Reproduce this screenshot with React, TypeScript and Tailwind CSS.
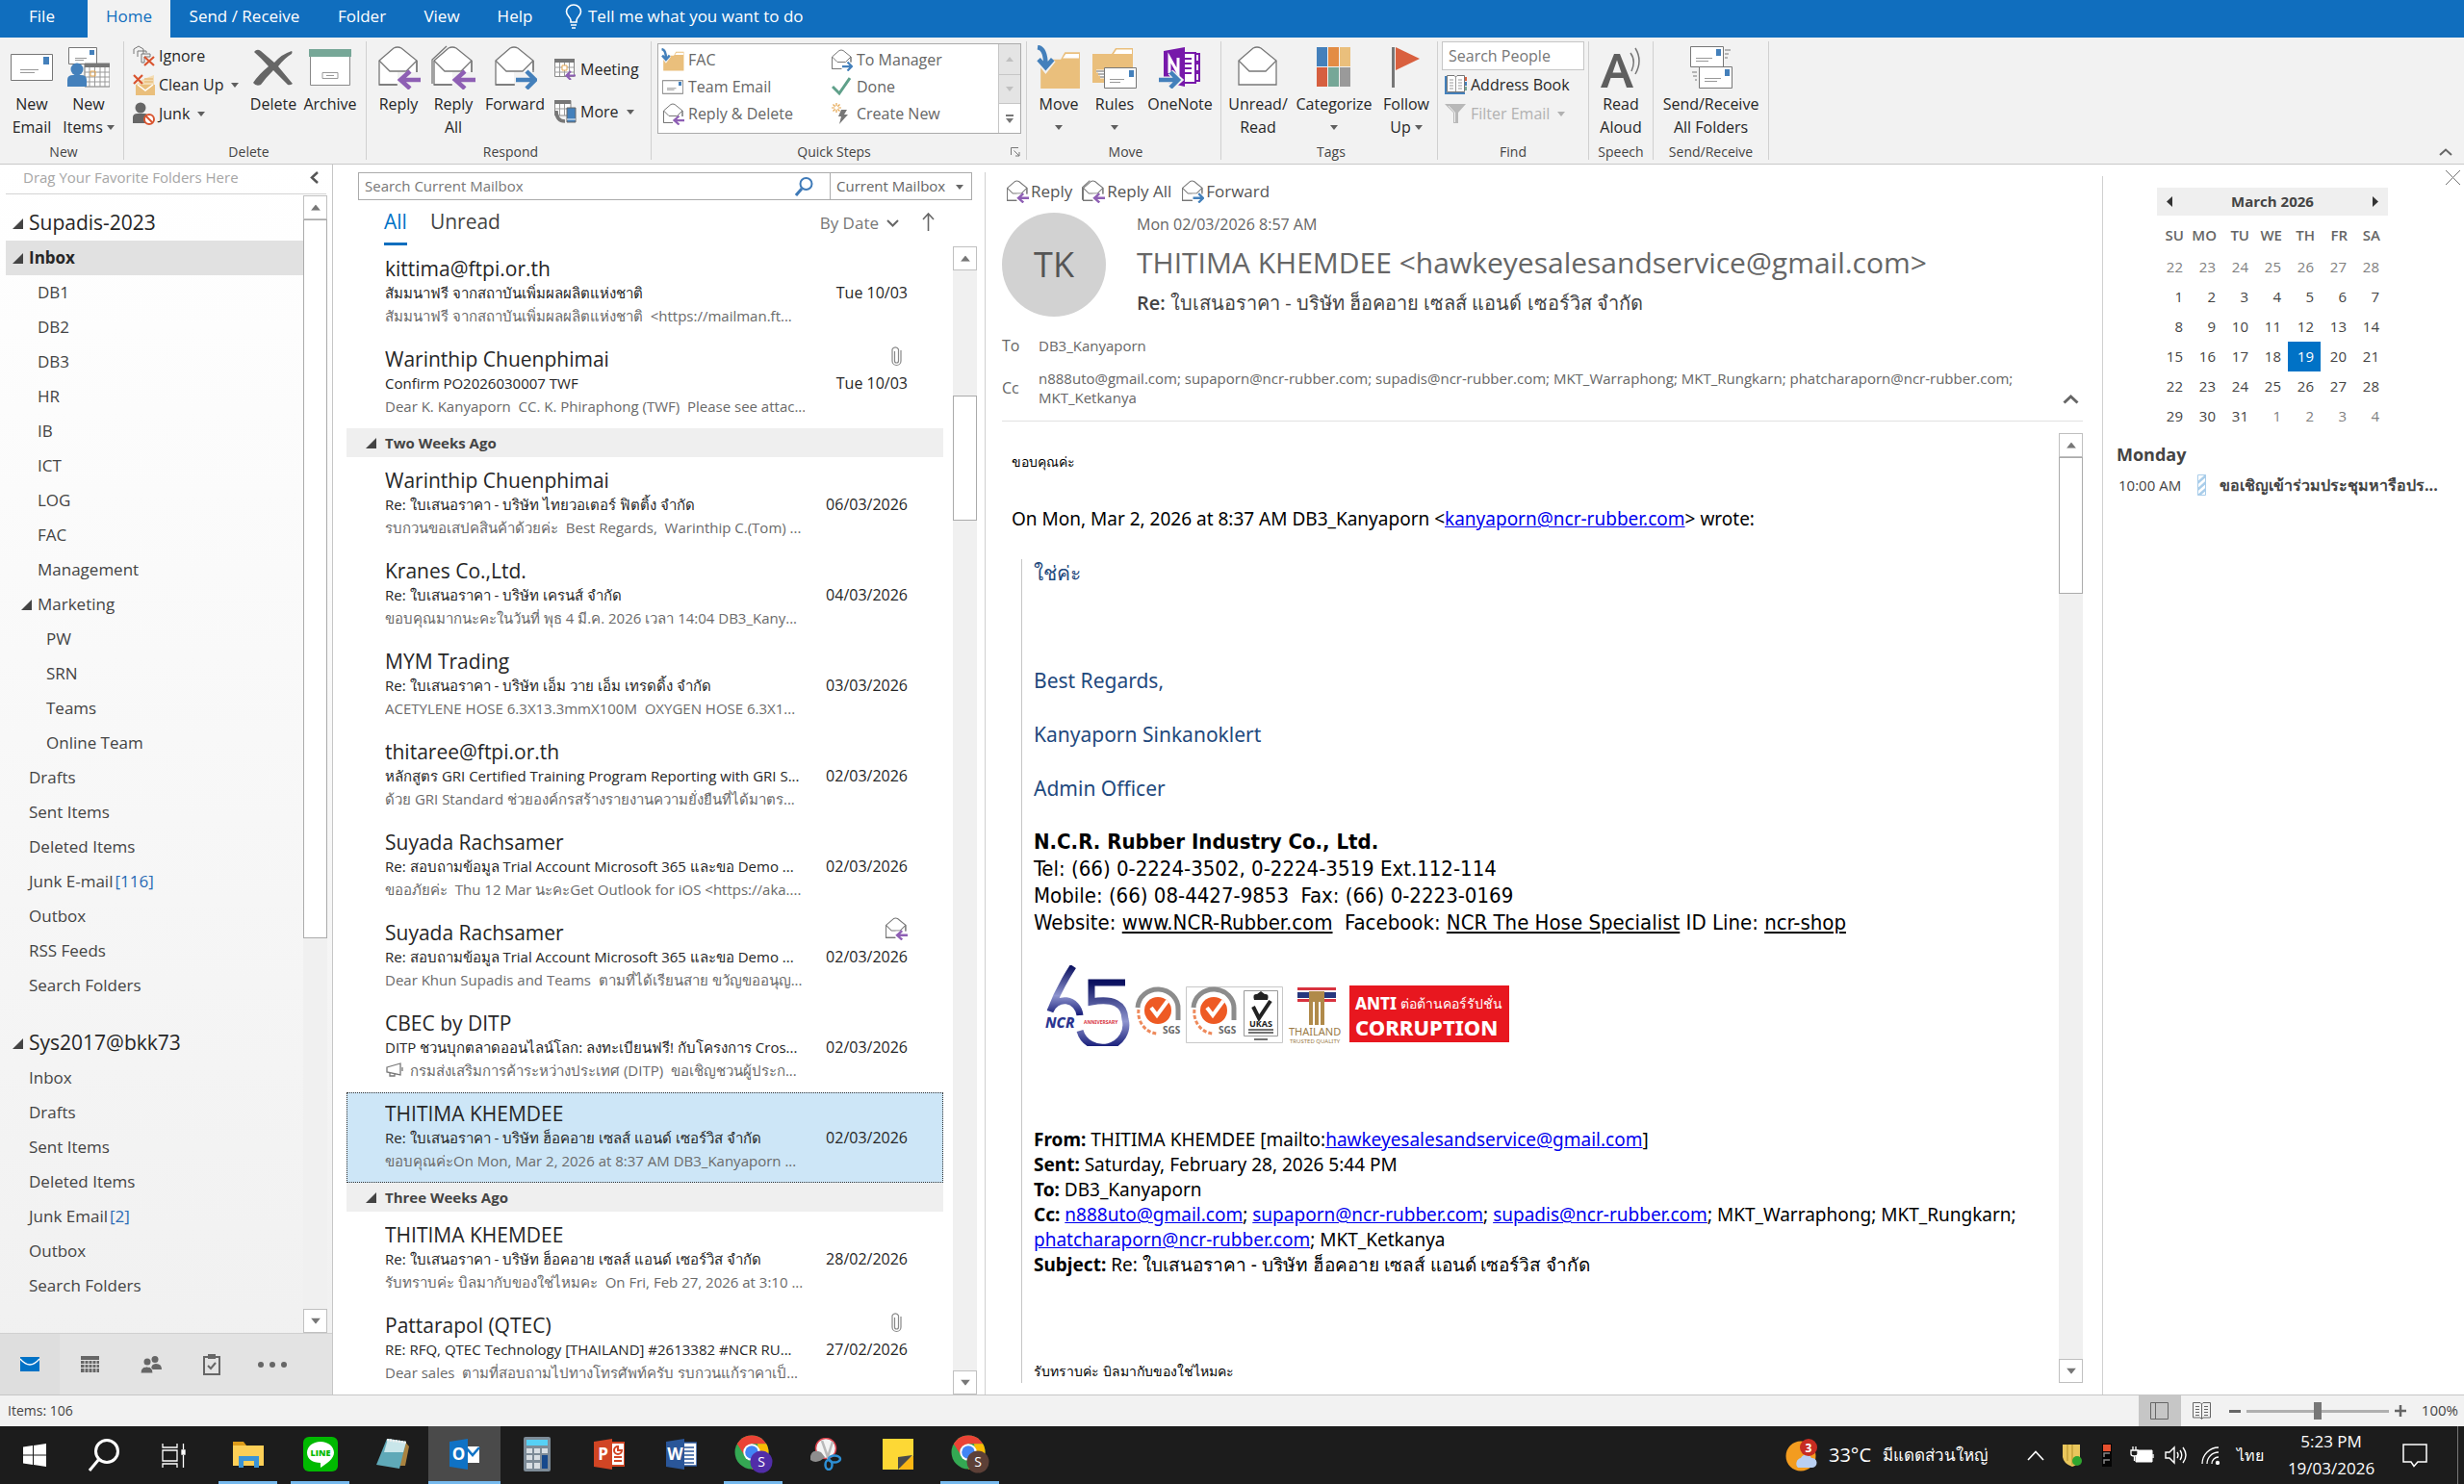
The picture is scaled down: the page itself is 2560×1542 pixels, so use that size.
import { useState } from "react";
import type { ReactNode } from "react";

type Mail = {
  id: number;
  from: string;
  subject: string;
  preview: string;
  date: string;
  flag?: "clip" | "replied";
  megaphone?: boolean;
};

type MailGroup = { title: string | null; mails: Mail[] };

type Folder = { name: string; level: 1 | 2 | 3; count?: number; open?: boolean };

const MAIL_GROUPS: MailGroup[] = [
  {
    title: null,
    mails: [
      { id: 1, from: "kittima@ftpi.or.th", subject: "สัมมนาฟรี จากสถาบันเพิ่มผลผลิตแห่งชาติ", preview: "สัมมนาฟรี จากสถาบันเพิ่มผลผลิตแห่งชาติ  <https://mailman.ft...", date: "Tue 10/03" },
      { id: 2, from: "Warinthip Chuenphimai", subject: "Confirm PO2026030007 TWF", preview: "Dear K. Kanyaporn  CC. K. Phiraphong (TWF)  Please see attac...", date: "Tue 10/03", flag: "clip" },
    ],
  },
  {
    title: "Two Weeks Ago",
    mails: [
      { id: 3, from: "Warinthip Chuenphimai", subject: "Re: ใบเสนอราคา - บริษัท ไทยวอเตอร์ ฟิตติ้ง จำกัด", preview: "รบกวนขอเสปคสินค้าด้วยค่ะ  Best Regards,  Warinthip C.(Tom) ...", date: "06/03/2026" },
      { id: 4, from: "Kranes Co.,Ltd.", subject: "Re: ใบเสนอราคา - บริษัท เครนส์ จำกัด", preview: "ขอบคุณมากนะคะในวันที่ พุธ 4 มี.ค. 2026 เวลา 14:04 DB3_Kany...", date: "04/03/2026" },
      { id: 5, from: "MYM Trading", subject: "Re: ใบเสนอราคา - บริษัท เอ็ม วาย เอ็ม เทรดดิ้ง จำกัด", preview: "ACETYLENE HOSE 6.3X13.3mmX100M  OXYGEN HOSE 6.3X1...", date: "03/03/2026" },
      { id: 6, from: "thitaree@ftpi.or.th", subject: "หลักสูตร GRI Certified Training Program Reporting with GRI S...", preview: "ด้วย GRI Standard ช่วยองค์กรสร้างรายงานความยั่งยืนที่ได้มาตร...", date: "02/03/2026" },
      { id: 7, from: "Suyada Rachsamer", subject: "Re: สอบถามข้อมูล Trial Account Microsoft 365 และขอ Demo ...", preview: "ขออภัยค่ะ  Thu 12 Mar นะคะGet Outlook for iOS <https://aka....", date: "02/03/2026" },
      { id: 8, from: "Suyada Rachsamer", subject: "Re: สอบถามข้อมูล Trial Account Microsoft 365 และขอ Demo ...", preview: "Dear Khun Supadis and Teams  ตามที่ได้เรียนสาย ขวัญขออนุญ...", date: "02/03/2026", flag: "replied" },
      { id: 9, from: "CBEC by DITP", subject: "DITP ชวนบุกตลาดออนไลน์โลก: ลงทะเบียนฟรี! กับโครงการ Cros...", preview: "กรมส่งเสริมการค้าระหว่างประเทศ (DITP)  ขอเชิญชวนผู้ประก...", date: "02/03/2026", megaphone: true },
      { id: 10, from: "THITIMA KHEMDEE", subject: "Re: ใบเสนอราคา - บริษัท ฮ็อคอาย เซลส์ แอนด์ เซอร์วิส จำกัด", preview: "ขอบคุณค่ะOn Mon, Mar 2, 2026 at 8:37 AM DB3_Kanyaporn ...", date: "02/03/2026" },
    ],
  },
  {
    title: "Three Weeks Ago",
    mails: [
      { id: 11, from: "THITIMA KHEMDEE", subject: "Re: ใบเสนอราคา - บริษัท ฮ็อคอาย เซลส์ แอนด์ เซอร์วิส จำกัด", preview: "รับทราบค่ะ บิลมากับของใช่ไหมคะ  On Fri, Feb 27, 2026 at 3:10 ...", date: "28/02/2026" },
      { id: 12, from: "Pattarapol (QTEC)", subject: "RE: RFQ, QTEC Technology [THAILAND] #2613382 #NCR RU...", preview: "Dear sales  ตามที่สอบถามไปทางโทรศัพท์ครับ รบกวนแก้ราคาเป็...", date: "27/02/2026", flag: "clip" },
    ],
  },
];

const MAIN_FOLDERS: Folder[] = [
  { name: "Inbox", level: 1, open: true },
  { name: "DB1", level: 2 },
  { name: "DB2", level: 2 },
  { name: "DB3", level: 2 },
  { name: "HR", level: 2 },
  { name: "IB", level: 2 },
  { name: "ICT", level: 2 },
  { name: "LOG", level: 2 },
  { name: "FAC", level: 2 },
  { name: "Management", level: 2 },
  { name: "Marketing", level: 2, open: true },
  { name: "PW", level: 3 },
  { name: "SRN", level: 3 },
  { name: "Teams", level: 3 },
  { name: "Online Team", level: 3 },
  { name: "Drafts", level: 1 },
  { name: "Sent Items", level: 1 },
  { name: "Deleted Items", level: 1 },
  { name: "Junk E-mail", level: 1, count: 116 },
  { name: "Outbox", level: 1 },
  { name: "RSS Feeds", level: 1 },
  { name: "Search Folders", level: 1 },
];

const SECOND_FOLDERS: Folder[] = [
  { name: "Inbox", level: 1 },
  { name: "Drafts", level: 1 },
  { name: "Sent Items", level: 1 },
  { name: "Deleted Items", level: 1 },
  { name: "Junk Email", level: 1, count: 2 },
  { name: "Outbox", level: 1 },
  { name: "Search Folders", level: 1 },
];

const WEEKDAYS = ["SU", "MO", "TU", "WE", "TH", "FR", "SA"];
const WEEKS = [
  [22, 23, 24, 25, 26, 27, 28],
  [1, 2, 3, 4, 5, 6, 7],
  [8, 9, 10, 11, 12, 13, 14],
  [15, 16, 17, 18, 19, 20, 21],
  [22, 23, 24, 25, 26, 27, 28],
  [29, 30, 31, 1, 2, 3, 4],
];

export default function App() {
  const [selectedId, setSelectedId] = useState(10);

  return (
    <div className="flex h-screen flex-col overflow-hidden bg-white font-['Open_Sans','Noto_Sans',sans-serif] text-base text-[#262626]">
      <TabBar />
      <Ribbon />
      <main className="flex min-h-0 flex-1">
        <FolderPane />
        <MailList selectedId={selectedId} onSelect={setSelectedId} />
        <ReadingPane />
        <TodoBar />
      </main>
      <StatusBar />
      <Taskbar />
    </div>
  );
}

/* ---------- tabs and ribbon ---------- */

function TabBar() {
  return (
    <nav className="flex h-[39px] shrink-0 items-stretch bg-[#106ebe] text-[17px] leading-8 text-white [&>button]:pb-1.5">
      <button type="button" className="w-[91px] pr-1">File</button>
      <button type="button" className="w-[86px] bg-[#f2f2f2] text-[#106ebe]">Home</button>
      <button type="button" className="w-[154px]">Send / Receive</button>
      <button type="button" className="w-[90px]">Folder</button>
      <button type="button" className="w-[76px]">View</button>
      <button type="button" className="w-[76px]">Help</button>
      <button type="button" className="flex items-center gap-1.5 pl-3.5">
        <svg width="18" height="26" viewBox="0 0 18 26" fill="none" stroke="#fff" strokeWidth="1.6">
          <path d="M6 19V17C6 14 1.500 12.500 1.500 8A7.500 7 0 0 1 16.500 8C16.500 12.500 12 14 12 17V19ZM6 22H12M7 25H11" />
        </svg>
        Tell me what you want to do
      </button>
    </nav>
  );
}

function Caret({ className = "text-[#5f5f5f]" }: { className?: string }) {
  return (
    <svg width="8" height="5" viewBox="0 0 8 5" className={`inline-block ${className}`}>
      <path d="M0 0H8L4 5Z" fill="currentColor" />
    </svg>
  );
}

function RibbonGroup({ title, className, launcher, children }: { title: string; className: string; launcher?: boolean; children: ReactNode }) {
  return (
    <section className={`my-1 flex shrink-0 flex-col border-r border-[#d0d0d0] ${className}`}>
      <div className="flex flex-1">{children}</div>
      <div className="flex h-4 items-center justify-center text-sm leading-4 text-[#444]">
        <span className="flex-1 text-center">{title}</span>
        {launcher && (
          <svg width="10" height="10" viewBox="0 0 10 10" fill="none" stroke="#777" className="mr-1.5">
            <path d="M.5 8V.5H8M3.500 3.500L9 9M9 5V9H5" />
          </svg>
        )}
      </div>
    </section>
  );
}

function BigButton({ icon, lines, className, caret }: { icon: ReactNode; lines: string[]; className: string; caret?: boolean }) {
  return (
    <button type="button" className={`flex shrink-0 flex-col items-center self-start whitespace-nowrap leading-6 ${className}`}>
      <span className="flex h-[53px] items-center justify-center">{icon}</span>
      <span>{lines[0]}</span>
      <span className="flex h-6 items-center gap-1">
        {lines[1]}
        {caret && <Caret />}
      </span>
    </button>
  );
}

function SmallButton({ icon, label, caret, disabled }: { icon: ReactNode; label: string; caret?: boolean; disabled?: boolean }) {
  return (
    <button
      type="button"
      disabled={disabled}
      className={`flex h-[30px] items-center gap-1 whitespace-nowrap leading-6 ${disabled ? "text-[#b1b1b1]" : ""}`}
    >
      <span className="flex w-6 justify-center">{icon}</span>
      {label}
      {caret && <Caret className={disabled ? "ml-1 text-[#b1b1b1]" : "ml-1 text-[#5f5f5f]"} />}
    </button>
  );
}

function Ribbon() {
  return (
    <header className="flex h-[132px] shrink-0 border-b border-[#c8c8c8] bg-[#f2f2f2]">
      <RibbonGroup title="New" className="w-[129px] pl-1">
        <BigButton icon={<ClosedMail />} lines={["New", "Email"]} className="w-[58px]" />
        <BigButton icon={<NewItemsIcon />} lines={["New", "Items"]} caret className="w-[60px]" />
      </RibbonGroup>

      <RibbonGroup title="Delete" className="w-[252px] pl-2">
        <div className="flex w-[118px] flex-col">
          <SmallButton icon={<IgnoreIcon />} label="Ignore" />
          <SmallButton icon={<CleanUpIcon />} label="Clean Up" caret />
          <SmallButton icon={<JunkIcon />} label="Junk" caret />
        </div>
        <BigButton icon={<DeleteIcon />} lines={["Delete"]} className="w-[58px]" />
        <BigButton icon={<ArchiveIcon />} lines={["Archive"]} className="w-[60px]" />
      </RibbonGroup>

      <RibbonGroup title="Respond" className="w-[296px] pl-1">
        <BigButton icon={<OpenMail size={46} arrow="left" />} lines={["Reply"]} className="w-[58px]" />
        <BigButton icon={<OpenMail size={46} arrow="left" double />} lines={["Reply", "All"]} className="w-[56px]" />
        <BigButton icon={<OpenMail size={46} arrow="right" />} lines={["Forward"]} className="w-[72px]" />
        <div className="flex flex-col gap-3.5 pt-3.5 pl-1">
          <SmallButton icon={<MeetingIcon />} label="Meeting" />
          <SmallButton icon={<MoreIcon />} label="More" caret />
        </div>
      </RibbonGroup>

      <RibbonGroup title="Quick Steps" className="w-[390px] pl-1.5" launcher>
        <div className="mt-0.5 flex h-[94px] w-[378px] border border-[#ababab] bg-white text-[#666]">
          <div className="grid flex-1 grid-cols-2 grid-rows-3 pt-0.5 pb-1.5 pl-[3px] [&>button]:h-7">
            <SmallButton icon={<MoveFolder size={24} />} label="FAC" />
            <SmallButton icon={<OpenMail size={23} arrow="right" />} label="To Manager" />
            <SmallButton icon={<ClosedMail small />} label="Team Email" />
            <SmallButton
              icon={
                <svg width="20" height="20" viewBox="0 0 20 20">
                  <path d="M1 10L8 17L19 1" fill="none" stroke="#5fa08a" strokeWidth="3" />
                </svg>
              }
              label="Done"
            />
            <SmallButton icon={<OpenMail size={23} arrow="left" />} label="Reply & Delete" />
            <SmallButton
              icon={
                <svg width="20" height="22" viewBox="0 0 20 22">
                  <path d="M5 0V10M0 5H10M1.500 1.500L8.500 8.500M8.500 1.500L1.500 8.500" stroke="#e5a54e" strokeWidth="1.200" />
                  <path d="M10 7H16L13 12H17L8 22L10 14H7Z" fill="#777" />
                  <circle cx="5" cy="5" r="2" fill="#fff" />
                </svg>
              }
              label="Create New"
            />
          </div>
          <div className="flex w-[23px] flex-col border-l border-[#c6c6c6]">
            <button type="button" aria-label="Previous row" className="flex h-8 items-center justify-center border-b border-[#c6c6c6] bg-[#e4e4e4]">
              <Caret className="rotate-180 text-[#c0c0c0]" />
            </button>
            <button type="button" aria-label="Next row" className="flex h-[30px] items-center justify-center border-b border-[#c6c6c6] bg-[#e4e4e4]">
              <Caret className="text-[#c0c0c0]" />
            </button>
            <button type="button" aria-label="All quick steps" className="flex flex-1 flex-col items-center justify-center gap-0.5">
              <span className="h-0.5 w-2 bg-[#777]" />
              <Caret className="text-[#777]" />
            </button>
          </div>
        </div>
      </RibbonGroup>

      <RibbonGroup title="Move" className="w-[202px] pl-1">
        <BigButton icon={<MoveFolder size={46} />} lines={["Move"]} caret className="w-[58px]" />
        <BigButton icon={<RulesIcon />} lines={["Rules"]} caret className="w-[58px]" />
        <BigButton icon={<OneNoteIcon />} lines={["OneNote"]} className="w-[78px]" />
      </RibbonGroup>

      <RibbonGroup title="Tags" className="w-[225px] pl-1">
        <BigButton icon={<OpenMail size={46} />} lines={["Unread/", "Read"]} className="w-[68px]" />
        <BigButton icon={<CategorizeIcon />} lines={["Categorize"]} caret className="w-[90px]" />
        <BigButton
          icon={
            <svg width="30" height="44" viewBox="0 0 30 44">
              <path d="M0 1H3V43H0Z" fill="#777" />
              <path d="M4 1L29 13L4 25Z" fill="#d9603f" />
            </svg>
          }
          lines={["Follow", "Up"]}
          caret
          className="w-[60px]"
        />
      </RibbonGroup>

      <RibbonGroup title="Find" className="w-[157px] px-1">
        <div className="flex flex-1 flex-col">
          <input
            aria-label="Search People"
            placeholder="Search People"
            className="h-[30px] w-full border border-[#c6c6c6] bg-white px-1.5 placeholder:text-[#777]"
          />
          <div className="flex flex-col pl-0.5">
            <SmallButton icon={<AddressBookIcon />} label="Address Book" />
            <SmallButton
              disabled
              caret
              label="Filter Email"
              icon={
                <svg width="22" height="22" viewBox="0 0 22 22">
                  <path d="M0 1H22L14 10V21H9V10Z" fill="#b8b8b8" />
                  <path d="M4 3L10.500 10V20" fill="none" stroke="#f2f2f2" />
                </svg>
              }
            />
          </div>
        </div>
      </RibbonGroup>

      <RibbonGroup title="Speech" className="w-[67px]">
        <BigButton
          icon={
            <svg width="44" height="44" viewBox="0 0 44 44">
              <path d="M1 43L15 8H21L35 43H28L24.500 33H11.500L8 43ZM13.500 27.500H22.500L18 14.500Z" fill="#5f5f5f" />
              <path d="M32 7Q38 15 33 26M37 2Q45 15 37 29" fill="none" stroke="#777" strokeWidth="1.500" />
            </svg>
          }
          lines={["Read", "Aloud"]}
          className="w-[66px]"
        />
      </RibbonGroup>

      <RibbonGroup title="Send/Receive" className="w-[120px]">
        <BigButton icon={<SendReceiveIcon />} lines={["Send/Receive", "All Folders"]} className="w-[119px]" />
      </RibbonGroup>

      <button type="button" aria-label="Collapse ribbon" className="mr-3 mb-2 ml-auto self-end">
        <svg width="14" height="8" viewBox="0 0 14 8" fill="none" stroke="#666" strokeWidth="2">
          <path d="M1 7L7 1.500L13 7" />
        </svg>
      </button>
    </header>
  );
}

function OpenMail({ size, arrow, double }: { size: number; arrow?: "left" | "right"; double?: boolean }) {
  return (
    <svg width={size} height={size} viewBox="0 0 46 46" fill="none" strokeWidth={size > 30 ? 1.3 : 2}>
      {double && <path d="M1 40V15L16 1" stroke="#777" />}
      <path d="M3 16L18 3Q22 1 26 3L42 16V41H3Z" fill="#fff" stroke="#777" />
      <path d="M3 16L14 27H31L42 16" stroke="#777" />
      {arrow === "left" && (
        <>
          <path d="M22 46V28H46V46Z" fill={size > 30 ? "#f2f2f2" : "#fff"} stroke="none" />
          <path d="M3 41H21M42 16V28" stroke="#777" />
          <path d="M46 36H26M35 27L25 36L35 45" stroke="#8e5fb4" strokeWidth="4.500" />
        </>
      )}
      {arrow === "right" && (
        <>
          <path d="M22 46V28H46V46Z" fill={size > 30 ? "#f2f2f2" : "#fff"} stroke="none" />
          <path d="M3 41H23M42 16V26" stroke="#777" />
          <path d="M24 36H44M35 27L44 36L35 45" stroke="#4480bb" strokeWidth="4.500" />
        </>
      )}
    </svg>
  );
}

function ClosedMail({ small }: { small?: boolean }) {
  return (
    <svg width={small ? 22 : 44} height={small ? 15 : 28} viewBox="0 0 44 28" fill="none" strokeWidth={small ? 2 : 1}>
      <path d="M.5 .5H43.500V27.500H.5Z" fill="#fff" stroke="#777" />
      <path d="M34 3H40V11H34Z" fill="#4480bb" />
      <path d="M10 16.500H29M10 19.500H25" stroke="#999" />
    </svg>
  );
}

function NewItemsIcon() {
  return (
    <svg width="44" height="42" viewBox="0 0 44 42" fill="none">
      <path d="M1.500 .5H30.500V17.500H1.500Z" fill="#fff" stroke="#777" />
      <path d="M23 3H28V8H23Z" fill="#4480bb" />
      <path d="M8 11.500H20M8 13.500H17" stroke="#999" />
      <path d="M18 17H44V41H18Z" fill="#fff" stroke="#777" />
      <path d="M18 17H44V21H18Z" fill="#777" />
      <path d="M23 21V41M28.500 21V41M34 21V41M39 21V41M18 26H44M18 31H44M18 36H44" stroke="#999" />
      <path d="M24 25H29V30H24Z" stroke="#e5a54e" />
      <circle cx="10" cy="23" r="6.500" fill="#4480bb" />
      <path d="M0 41V34Q0 29 6 29H14Q20 29 20 34V41Z" fill="#4480bb" />
    </svg>
  );
}

function IgnoreIcon() {
  return (
    <svg width="23" height="22" viewBox="0 0 23 22" fill="none" stroke="#777">
      <path d="M1 9V4L6 1L11 4V9M5 12V6H14V8M9 16V9H18V12H12V18H9Z" />
      <path d="M12 12L22 21M22 12L12 21" stroke="#d9542f" strokeWidth="2.200" />
    </svg>
  );
}

function CleanUpIcon() {
  return (
    <svg width="23" height="22" viewBox="0 0 23 22" fill="none">
      <path d="M9 6L22 1V20H3V11Z" fill="#f3dcb4" />
      <path d="M3 11H23V22H3Z" fill="#eabf7c" />
      <path d="M5 11L13 17L21 11" stroke="#fff" strokeWidth="1.500" />
      <path d="M12 5H21M12 8H21" stroke="#eabf7c" strokeWidth="1.500" />
      <path d="M1 1L10 10M10 1L1 10" stroke="#d9542f" strokeWidth="2.200" />
    </svg>
  );
}

function JunkIcon() {
  return (
    <svg width="23" height="24" viewBox="0 0 23 24">
      <circle cx="8" cy="6" r="5.500" fill="#666" />
      <path d="M0 22V16Q0 12 5 12H12Q16 12 16 16V22Z" fill="#666" />
      <circle cx="17" cy="18" r="5" fill="#fff" stroke="#d9542f" strokeWidth="2" />
      <path d="M13.500 14.500L20.500 21.500" stroke="#d9542f" strokeWidth="2" />
    </svg>
  );
}

function DeleteIcon() {
  return (
    <svg width="42" height="38" viewBox="0 0 42 38">
      <path d="M1 3Q4 -1 8 2L22 14Q30 5 40 2Q41 3 40 5Q33 9 26 18L41 36Q38 38 36 37L21 22Q13 30 8 37Q3 39 0 35Q6 26 16 18Q8 9 1 3Z" fill="#666" />
    </svg>
  );
}

function ArchiveIcon() {
  return (
    <svg width="44" height="38" viewBox="0 0 44 38" fill="none">
      <path d="M1.500 5V37.500H42.500V5" fill="#fff" stroke="#888" />
      <path d="M0 0H44V8H0Z" fill="#76a797" />
      <path d="M14 24.500H30V30.500H14Z M18 27.500H26" stroke="#999" />
    </svg>
  );
}

function MeetingIcon() {
  return (
    <svg width="22" height="22" viewBox="0 0 22 22" fill="none">
      <path d="M.5 1H20.500V18.500H.5Z" fill="#fff" stroke="#888" />
      <path d="M0 0H21V4H0Z" fill="#777" />
      <path d="M5.500 4V18M10.500 4V18M15.500 4V18M0 9H20M0 14H20" stroke="#999" />
      <path d="M8 7H13V12H8Z" fill="#fff" stroke="#e5a54e" />
      <path d="M22 17.500H13M17 13L12.500 17.500L17 22" stroke="#8e5fb4" strokeWidth="2.200" />
    </svg>
  );
}

function MoreIcon() {
  return (
    <svg width="23" height="24" viewBox="0 0 23 24" fill="none">
      <path d="M.5 .5H17V16H.5Z" fill="#fff" stroke="#888" />
      <path d="M0 0H17V4H0Z" fill="#777" />
      <path d="M5.500 4V16M10.500 4V16M0 9H17" stroke="#999" />
      <path d="M2 11Q2 22 11 22" stroke="#777" strokeWidth="3.500" />
      <path d="M13 8H22V23H13Z" fill="#4480bb" stroke="#666" />
      <path d="M13 20H22" stroke="#fff" />
    </svg>
  );
}

function MoveFolder({ size }: { size: number }) {
  return (
    <svg width={size} height={size} viewBox="0 0 44 44" fill="none">
      <path d="M4 14H24L28 7H43V43H4Z" fill="#eabf7c" />
      <path d="M26 13L29 8.500H42V13Z" fill="#fff" />
      <path d="M1 2Q9 3 9 20M2 14L9 23L16 14" stroke="#f2f2f2" strokeWidth="7" />
      <path d="M1 2Q9 3 9 20M2 14L9 22L16 14" stroke="#4480bb" strokeWidth="4.500" />
    </svg>
  );
}

function RulesIcon() {
  return (
    <svg width="46" height="44" viewBox="0 0 46 44" fill="none">
      <path d="M0 8H20L24 2H42V38H0Z" fill="#eabf7c" />
      <path d="M22 8L25 3.500H41V8Z" fill="#fff" />
      <path d="M4 26H12M6 29H12M8 32H12" stroke="#fff" strokeWidth="3" />
      <path d="M4 26H12M6 29H12M8 32H12" stroke="#666" />
      <path d="M12.500 22.500H45.500V43.500H12.500Z" fill="#fff" stroke="#777" />
      <path d="M38 25H43V32H38Z" fill="#4480bb" />
      <path d="M18 34.500H33M18 37.500H29" stroke="#999" />
    </svg>
  );
}

function OneNoteIcon() {
  return (
    <svg width="44" height="44" viewBox="0 0 44 44" fill="none">
      <path d="M24 7H38V38H24Z" fill="#fff" stroke="#7719aa" strokeWidth="2" />
      <path d="M38 8H42V16H38M38 18H42V26H38M38 28H42V36H38" stroke="#7719aa" strokeWidth="2" />
      <path d="M27 13H34M27 18H34M27 23H34M27 28H34" stroke="#7719aa" strokeWidth="2" />
      <path d="M5 5L27 1V42L5 37Z" fill="#7719aa" />
      <path d="M11 28V12L20 28V12" stroke="#fff" strokeWidth="3" />
      <path d="M0 35H20M12 27L21 35L12 43" stroke="#f2f2f2" strokeWidth="7" />
      <path d="M0 35H20M12 27L20 35L12 43" stroke="#4480bb" strokeWidth="4.500" />
    </svg>
  );
}

function CategorizeIcon() {
  return (
    <svg width="36" height="42" viewBox="0 0 36 42">
      <path d="M0 0H11V20H0Z" fill="#4480bb" />
      <path d="M12 0H23V20H12Z" fill="#e38c44" />
      <path d="M24 0H35V20H24Z" fill="#eabf7c" />
      <path d="M0 21H11V41H0Z" fill="#d65f3f" />
      <path d="M12 21H23V41H12Z" fill="#76a797" />
      <path d="M24 21H35V41H24Z" fill="#9a9a9a" />
    </svg>
  );
}

function AddressBookIcon() {
  return (
    <svg width="23" height="20" viewBox="0 0 23 20" fill="none">
      <path d="M0 1H2V18H21V20H0Z" fill="#4480bb" />
      <path d="M2.500 .5H10L11.500 2L13 .5H20.500V17.500H2.500Z" fill="#fff" stroke="#777" />
      <path d="M11.500 2V17M5 5H9M5 8H9M5 11H9M14 5H18M14 8H18M14 11H18M5 14H9M14 14H18" stroke="#999" />
      <path d="M21 2H23V6H21Z" fill="#d65f3f" />
      <path d="M21 7H23V11H21Z" fill="#4480bb" />
      <path d="M21 12H23V16H21Z" fill="#76a797" />
    </svg>
  );
}

function SendReceiveIcon() {
  return (
    <svg width="44" height="44" viewBox="0 0 44 44" fill="none">
      <path d="M.5 .5H34.500V21.500H.5Z" fill="#fff" stroke="#777" />
      <path d="M27 3H32V10H27Z" fill="#4480bb" />
      <path d="M6 12.500H23M6 15.500H19" stroke="#999" />
      <path d="M36 4H42M36 8H40M36 12H39M2 27H7M3 31H7M5 35H7" stroke="#777" />
      <path d="M9.500 21.500H43.500V43.500H9.500Z" fill="#fff" stroke="#777" />
      <path d="M36 24H41V31H36Z" fill="#4480bb" />
      <path d="M15 33.500H32M15 36.500H28" stroke="#999" />
    </svg>
  );
}

/* ---------- scroll bar shared by the three panes ---------- */

function ScrollBar({ className = "", before, thumb }: { className?: string; before: string; thumb: string }) {
  return (
    <div className={`flex w-[25px] shrink-0 flex-col bg-[#f0f0f0] ${className}`}>
      <button type="button" aria-label="Scroll up" className="flex h-[25px] shrink-0 items-center justify-center border border-[#c0c0c0] bg-white">
        <Caret className="rotate-180 scale-125 text-[#777]" />
      </button>
      <div className={before} />
      <div className={`border border-[#ababab] bg-white ${thumb}`} />
      <button type="button" aria-label="Scroll down" className="mt-auto flex h-[25px] shrink-0 items-center justify-center border border-[#c0c0c0] bg-white">
        <Caret className="scale-125 text-[#777]" />
      </button>
    </div>
  );
}

/* ---------- folder pane ---------- */

function Twisty() {
  return (
    <svg width="11" height="11" viewBox="0 0 11 11" className="shrink-0">
      <path d="M11 0V11H0Z" fill="#444" />
    </svg>
  );
}

const LEVEL_PADDING = { 1: "pl-[7px]", 2: "pl-4", 3: "pl-[25px]" };

function FolderRow({ folder, selected }: { folder: Folder; selected?: boolean }) {
  return (
    <li>
      <button
        type="button"
        className={`flex h-9 w-full items-center gap-1.5 text-[17px] ${LEVEL_PADDING[folder.level]} ${
          selected ? "bg-[#e1e1e1] font-bold text-[#262626]" : "text-[#444]"
        }`}
      >
        <span className="flex w-[11px]">{folder.open && <Twisty />}</span>
        <span>
          {folder.name}
          {folder.count && <span className="pl-0.5 text-[#2a6ab5]">[{folder.count}]</span>}
        </span>
      </button>
    </li>
  );
}

function FolderPane() {
  return (
    <aside className="flex w-[346px] shrink-0 flex-col border-r border-[#c6c6c6] bg-gradient-to-b from-white to-[#f0f0f0]">
      <div className="mx-1.5 flex h-[31px] items-center justify-between border-b border-[#d4d4d4] pr-2 pb-1 pl-[18px] text-[15px] text-[#a6a6a6]">
        Drag Your Favorite Folders Here
        <button type="button" aria-label="Minimize folder pane">
          <svg width="9" height="13" viewBox="0 0 9 13" fill="none" stroke="#555" strokeWidth="2.500">
            <path d="M8 1L2 6.500L8 12" />
          </svg>
        </button>
      </div>
      <div className="flex min-h-0 flex-1 pl-1.5">
        <div className="flex-1 overflow-hidden pt-3">
          <h2 className="flex h-9 items-center gap-1.5 pl-[7px] text-[21px]">
            <Twisty />
            Supadis-2023
          </h2>
          <ul>
            {MAIN_FOLDERS.map((f, i) => (
              <FolderRow key={i} folder={f} selected={i === 0} />
            ))}
          </ul>
          <h2 className="mt-6 flex h-9 items-center gap-1.5 pl-[7px] text-[21px]">
            <Twisty />
            Sys2017@bkk73
          </h2>
          <ul>
            {SECOND_FOLDERS.map((f, i) => (
              <FolderRow key={i} folder={f} />
            ))}
          </ul>
        </div>
        <ScrollBar className="mr-[5px] mt-px" before="h-0" thumb="h-[747px]" />
      </div>
      <nav className="flex h-16 shrink-0 items-center border-t border-[#d0d0d0] bg-[#e3e3e3] text-[#666]">
        <button type="button" aria-label="Mail" className="flex h-full w-[62px] items-center justify-center bg-[#dedede]">
          <svg width="20" height="15" viewBox="0 0 20 15">
            <path d="M0 0H20V15H0Z" fill="#0072c6" />
            <path d="M0 2Q10 14 20 2" fill="none" stroke="#fff" strokeWidth="1.300" />
          </svg>
        </button>
        <button type="button" aria-label="Calendar" className="flex w-[63px] justify-center">
          <svg width="19" height="17" viewBox="0 0 19 17">
            <path d="M0 0H19V4H0Z M0 5H19V17H0Z" fill="#666" />
            <path d="M0 8.500H19M0 12.500H19M4 5V17M8 5V17M12 5V17M16 5V17" stroke="#e3e3e3" />
          </svg>
        </button>
        <button type="button" aria-label="People" className="flex w-[63px] justify-center">
          <svg width="22" height="18" viewBox="0 0 22 18" fill="#666">
            <circle cx="15" cy="3.500" r="3.500" />
            <path d="M11 14Q11 8 16 8Q22 8 22 14Z" />
            <circle cx="7" cy="6" r="4.500" fill="#e3e3e3" />
            <circle cx="7" cy="6" r="3.500" />
            <path d="M0 18Q0 11 6.500 11Q13 11 13 18Z" stroke="#e3e3e3" />
          </svg>
        </button>
        <button type="button" aria-label="Tasks" className="flex w-[63px] justify-center">
          <svg width="18" height="22" viewBox="0 0 18 22" fill="none" stroke="#666" strokeWidth="2">
            <path d="M1 3H17V21H1Z M5 12L8 15L13 9" />
            <path d="M5 0H13V5H5Z" fill="#666" stroke="none" />
          </svg>
        </button>
        <button type="button" aria-label="More" className="flex w-[63px] justify-center gap-1.5">
          <span className="size-1.5 rounded-full bg-[#666]" />
          <span className="size-1.5 rounded-full bg-[#666]" />
          <span className="size-1.5 rounded-full bg-[#666]" />
        </button>
      </nav>
    </aside>
  );
}

/* ---------- message list ---------- */

function MailRow({ mail, selected, onSelect }: { mail: Mail; selected: boolean; onSelect: (id: number) => void }) {
  return (
    <li>
      <button
        type="button"
        onClick={() => onSelect(mail.id)}
        className={`flex h-[94px] w-full justify-between border border-dotted pr-9 pl-[39px] text-left ${
          selected ? "border-[#333] bg-[#cde6f7]" : "border-transparent"
        }`}
      >
        <span className="block w-[436px] overflow-hidden pt-2 whitespace-pre">
          <span className="block text-[21px] leading-[26px]">{mail.from}</span>
          <span className="block text-[15px] leading-6">{mail.subject}</span>
          <span className="flex items-center gap-1.5 text-[15px] leading-6 text-[#6a6a6a]">
            {mail.megaphone && (
              <svg width="20" height="16" viewBox="0 0 20 16" fill="none" stroke="#777" strokeWidth="1.300">
                <path d="M2 5L16 1V13L2 10ZM18 5V9M5 11V14H10V12" />
              </svg>
            )}
            {mail.preview}
          </span>
        </span>
        <span className="flex flex-col items-end">
          <span className="flex h-[34px] items-center justify-end">
            {mail.flag === "clip" && (
              <svg width="11" height="23" viewBox="0 0 11 23" fill="none" stroke="#888" strokeWidth="1.200" className="mr-1.5">
                <path d="M3.500 7V17A2 2 0 0 0 7.500 17V5A3.500 3.500 0 0 0 1 5V17A4.500 4.500 0 0 0 10 17V6" />
              </svg>
            )}
            {mail.flag === "replied" && <OpenMail size={24} arrow="left" />}
          </span>
          <span className="text-base leading-6">{mail.date}</span>
        </span>
      </button>
    </li>
  );
}

function MailList({ selectedId, onSelect }: { selectedId: number; onSelect: (id: number) => void }) {
  return (
    <section className="mt-2 flex w-[678px] shrink-0 flex-col border-r border-[#d0d0d0]">
      <div className="mr-[13px] ml-[26px] flex h-[29px] shrink-0 border border-[#ababab] text-[15px] text-[#666]">
        <input aria-label="Search Current Mailbox" placeholder="Search Current Mailbox" className="flex-1 px-1.5 placeholder:text-[#777]" />
        <button type="button" aria-label="Search" className="w-[54px]">
          <svg width="19" height="20" viewBox="0 0 19 20" fill="none" stroke="#3f7ab8" strokeWidth="2" className="mx-auto">
            <circle cx="11.500" cy="7" r="6" />
            <path d="M7 12L1 19" strokeWidth="3" />
          </svg>
        </button>
        <div className="relative flex w-[147px] border-l border-[#ababab]">
          <select aria-label="Search scope" className="w-full appearance-none bg-transparent pl-1.5">
            <option>Current Mailbox</option>
          </select>
          <Caret className="pointer-events-none absolute top-3 right-2" />
        </div>
      </div>

      <div className="flex h-12 shrink-0 items-start pt-2 pl-[53px] text-[21px] leading-7">
        <button type="button" className="flex h-[39px] items-start border-b-[3px] border-[#106ebe] text-[#0072c6]">All</button>
        <button type="button" className="ml-6 text-[#444]">Unread</button>
        <button type="button" className="ml-auto flex items-center gap-2 pt-0.5 text-[17px] leading-7 text-[#777]">
          By Date
          <svg width="13" height="8" viewBox="0 0 13 8" fill="none" stroke="#666" strokeWidth="2">
            <path d="M1 1L6.500 6.500L12 1" />
          </svg>
        </button>
        <button type="button" aria-label="Sort ascending" className="mr-[52px] ml-6 flex h-7 items-center">
          <svg width="13" height="19" viewBox="0 0 13 19" fill="none" stroke="#666" strokeWidth="1.600">
            <path d="M6.500 19V1M1 7L6.500 1L12 7" />
          </svg>
        </button>
      </div>

      <div className="flex min-h-0 flex-1">
        <div className="ml-3.5 w-[620px] shrink-0 overflow-hidden pt-px">
          {MAIL_GROUPS.map((group, i) => (
            <div key={i}>
              {group.title && (
                <h3 className="mb-0.5 flex h-[30px] items-center gap-[9px] bg-[#efefef] pl-5 text-[15px] font-bold text-[#444]">
                  <Twisty />
                  {group.title}
                </h3>
              )}
              <ul>
                {group.mails.map((mail) => (
                  <MailRow key={mail.id} mail={mail} selected={mail.id === selectedId} onSelect={onSelect} />
                ))}
              </ul>
            </div>
          ))}
        </div>
        <ScrollBar className="ml-2.5" before="h-[130px] shrink-0" thumb="h-[130px]" />
      </div>
    </section>
  );
}

/* ---------- reading pane ---------- */

function MailLink({ to }: { to: string }) {
  return (
    <a href={`mailto:${to}`} className="text-[#0000ee] underline">
      {to}
    </a>
  );
}

function ReadingPane() {
  return (
    <section className="mt-3 flex min-w-0 flex-1 flex-col border-r border-[#d0d0d0] pl-[17px]">
      <div className="flex h-[38px] shrink-0 items-center gap-2.5 pb-1.5 pl-1 text-[17px] text-[#555]">
        <button type="button" className="flex items-center gap-0.5">
          <OpenMail size={24} arrow="left" />
          Reply
        </button>
        <button type="button" className="flex items-center gap-0.5">
          <OpenMail size={24} arrow="left" double />
          Reply All
        </button>
        <button type="button" className="flex items-center gap-0.5">
          <OpenMail size={24} arrow="right" />
          Forward
        </button>
      </div>

      <header className="mr-5 shrink-0 border-b border-[#e1e1e1] text-[#666]">
        <div className="flex h-[110px] gap-8">
          <div className="flex size-[108px] items-center justify-center rounded-full bg-[#d2d2d2] text-[36px] text-[#555]">TK</div>
          <div className="pt-0.5">
            <p className="text-base leading-5">Mon 02/03/2026 8:57 AM</p>
            <h1 className="mt-2.5 text-[30px] leading-10 text-[#666]">THITIMA KHEMDEE &lt;hawkeyesalesandservice@gmail.com&gt;</h1>
            <p className="mt-1.5 text-[20px] leading-8 text-[#444]">
              <strong className="font-semibold">Re:</strong> ใบเสนอราคา - บริษัท ฮ็อคอาย เซลส์ แอนด์ เซอร์วิส จำกัด
            </p>
          </div>
        </div>
        <div className="mt-4 flex items-center">
          <span className="w-[38px] text-base">To</span>
          <span className="text-[15px] leading-5">DB3_Kanyaporn</span>
        </div>
        <div className="mt-3 flex h-[54px] items-start">
          <span className="w-[38px] pt-2 text-base">Cc</span>
          <p className="flex-1 text-[15px] leading-5">
            n888uto@gmail.com; supaporn@ncr-rubber.com; supadis@ncr-rubber.com; MKT_Warraphong; MKT_Rungkarn; phatcharaporn@ncr-rubber.com;
            <br />
            MKT_Ketkanya
          </p>
          <button type="button" aria-label="Collapse header" className="mr-1 self-center pt-2">
            <svg width="17" height="11" viewBox="0 0 17 11" fill="none" stroke="#666" strokeWidth="3">
              <path d="M1.500 9.500L8.500 3L15.500 9.500" />
            </svg>
          </button>
        </div>
      </header>

      <div className="flex min-h-0 flex-1">
        <article className="min-w-0 flex-1 overflow-hidden pt-[30px] pl-2.5 font-['Noto_Sans','Open_Sans',sans-serif] text-[19px] text-black">
          <p className="text-sm leading-6">ขอบคุณค่ะ</p>
          <p className="mt-[35px] leading-6">
            On Mon, Mar 2, 2026 at 8:37 AM DB3_Kanyaporn &lt;<MailLink to="kanyaporn@ncr-rubber.com" />&gt; wrote:
          </p>
          <blockquote className="mt-[30px] ml-2.5 border-l border-[#c6c6c6] pl-3">
            <div className="text-[21px] leading-7 text-[#1f497d]">
              <p>ใช่ค่ะ</p>
              <p className="mt-[84px]">Best Regards,</p>
              <p className="mt-7">Kanyaporn Sinkanoklert</p>
              <p className="mt-7">Admin Officer</p>
            </div>
            <div className="mt-7 font-['DejaVu_Sans_Condensed','DejaVu_Sans',sans-serif] text-[22px] leading-7 whitespace-pre">
              <p className="font-bold">N.C.R. Rubber Industry Co., Ltd.</p>
              <p>Tel: (66) 0-2224-3502, 0-2224-3519 Ext.112-114</p>
              <p>{"Mobile: (66) 08-4427-9853  Fax: (66) 0-2223-0169"}</p>
              <p>
                Website: <a href="#site" className="underline">www.NCR-Rubber.com</a>
                {"  Facebook: "}
                <a href="#facebook" className="underline">NCR The Hose Specialist</a> ID Line: <a href="#line" className="underline">ncr-shop</a>
              </p>
            </div>
            <CompanyLogos />
            <div className="mt-[84px] leading-[26px]">
              <p>
                <strong>From:</strong> THITIMA KHEMDEE [mailto:<MailLink to="hawkeyesalesandservice@gmail.com" />]
              </p>
              <p>
                <strong>Sent:</strong> Saturday, February 28, 2026 5:44 PM
              </p>
              <p>
                <strong>To:</strong> DB3_Kanyaporn
              </p>
              <p>
                <strong>Cc:</strong> <MailLink to="n888uto@gmail.com" />; <MailLink to="supaporn@ncr-rubber.com" />;{" "}
                <MailLink to="supadis@ncr-rubber.com" />; MKT_Warraphong; MKT_Rungkarn;
                <br />
                <MailLink to="phatcharaporn@ncr-rubber.com" />; MKT_Ketkanya
              </p>
              <p>
                <strong>Subject:</strong> Re: ใบเสนอราคา - บริษัท ฮ็อคอาย เซลส์ แอนด์ เซอร์วิส จำกัด
              </p>
            </div>
            <p className="mt-[86px] text-sm leading-6">รับทราบค่ะ บิลมากับของใช่ไหมคะ</p>
          </blockquote>
        </article>
        <ScrollBar className="mt-3 mr-5 mb-3" before="h-0" thumb="h-[142px]" />
      </div>
    </section>
  );
}

function SgsBadge({ x }: { x: number }) {
  return (
    <g transform={`translate(${x} 24)`} fill="none">
      <path d="M2 20A21 20 0 0 1 44 22V33" stroke="#8c8c8c" strokeWidth="5" />
      <path d="M3 22A21 22 0 0 0 22 47" stroke="#ee8a5c" strokeWidth="3" strokeDasharray="4 2" />
      <circle cx="23" cy="23" r="14" fill="#ee5a24" />
      <path d="M16 20L22 28L33 13" stroke="#fff" strokeWidth="4" />
      <text x="28" y="47" fontSize="10" fontWeight="700" fill="#666">SGS</text>
    </g>
  );
}

function CompanyLogos() {
  return (
    <svg width="500" height="84" viewBox="0 0 500 84" className="mt-[30px]" role="img" aria-label="Company certifications">
      <defs>
        <linearGradient id="years" x1="0" y1="0" x2="0" y2="1">
          <stop offset="0" stopColor="#0b1160" />
          <stop offset="0.600" stopColor="#8f95cf" />
          <stop offset="1" stopColor="#151b78" />
        </linearGradient>
      </defs>
      <g fill="none" stroke="url(#years)" strokeWidth="7">
        <path d="M41 1Q26 24 17 48M17 48A16 17 0 0 1 48 52" />
        <path d="M95 18H60V38Q94 32 95 56A24 23 0 0 1 48 68" />
      </g>
      <text x="12" y="65" fontSize="15" fontWeight="800" fontStyle="italic" fill="#2a3590">NCR</text>
      <text x="52" y="61" fontSize="5" fontWeight="700" fill="#d8333f">ANNIVERSARY</text>
      <SgsBadge x={106} />
      <path d="M158.500 22.500H258.500V80.500H158.500Z" fill="#fff" stroke="#c8c8c8" />
      <SgsBadge x={164} />
      <path d="M218.500 26.500H253.500V73.500H218.500Z" fill="#fff" stroke="#999" />
      <path d="M229 36Q227 29 232 30L236 27L240 30Q245 29 243 36Z" fill="#222" />
      <path d="M228 43L234 55L246 37" fill="none" stroke="#222" strokeWidth="4" />
      <text x="224" y="64" fontSize="9" fontWeight="700" fill="#222">UKAS</text>
      <path d="M223 67H249M223 70H249M229 77H243" stroke="#444" strokeWidth="1.500" />
      <path d="M274 23H314V38H274Z" fill="#d8333f" />
      <path d="M274 26H314V35H274Z" fill="#fff" />
      <path d="M274 28H314V34H274Z" fill="#27377e" />
      <path d="M286 38H290V62H286ZM292 38H296V62H292ZM298 38H302V62H298Z" fill="#b08a4a" />
      <path d="M286 27H302V38H286Z" fill="#b08a4a" />
      <text x="265" y="73" fontSize="11" fill="#9a7a45">THAILAND</text>
      <text x="266" y="81" fontSize="6" fill="#9a7a45">TRUSTED QUALITY</text>
      <path d="M328 21H494V80H328Z" fill="#e8171f" />
      <text x="334" y="46" fontSize="17" fontWeight="800" fill="#fff">ANTI</text>
      <text x="381" y="45" fontSize="14" fill="#fff">ต่อต้านคอร์รัปชั่น</text>
      <text x="334" y="73" fontSize="22" fontWeight="800" fill="#fff">CORRUPTION</text>
    </svg>
  );
}

/* ---------- to-do bar ---------- */

function TodoBar() {
  return (
    <aside className="w-[375px] shrink-0 text-base text-[#444]">
      <div className="flex h-6 items-center justify-end pt-0.5 pr-1">
        <button type="button" aria-label="Close">
          <svg width="15" height="15" viewBox="0 0 15 15" stroke="#777">
            <path d="M0 0L15 15M15 0L0 15" />
          </svg>
        </button>
      </div>
      <div className="ml-14 flex h-[29px] w-[240px] items-center justify-between bg-[#efefef] px-2.5 text-[15px] font-bold">
        <button type="button" aria-label="Previous month">
          <svg width="6" height="11" viewBox="0 0 6 11"><path d="M6 0V11L0 5.500Z" fill="#333" /></svg>
        </button>
        March 2026
        <button type="button" aria-label="Next month">
          <svg width="6" height="11" viewBox="0 0 6 11"><path d="M0 0V11L6 5.500Z" fill="#333" /></svg>
        </button>
      </div>
      <table className="mt-0.5 ml-14 w-[238px] table-fixed text-right text-[15px]">
        <thead>
          <tr className="h-9 text-[#666]">
            {WEEKDAYS.map((d) => (
              <th key={d} className="pr-1.5 font-semibold">{d}</th>
            ))}
          </tr>
        </thead>
        <tbody>
          {WEEKS.map((week, w) => (
            <tr key={w} className="h-[31px]">
              {week.map((day, d) => {
                const other = w === 0 || (w === 5 && day < 20);
                const today = w === 3 && day === 19;
                return (
                  <td key={d} className={`pr-[7px] ${today ? "bg-[#0072c6] text-white" : other ? "text-[#808080]" : ""}`}>
                    {day}
                  </td>
                );
              })}
            </tr>
          ))}
        </tbody>
      </table>
      <h3 className="mt-2.5 ml-3.5 text-[18px] leading-7 font-bold">Monday</h3>
      <button type="button" className="mt-1 ml-4 flex h-7 items-center text-[15px]">
        <span className="w-[82px] text-left">10:00 AM</span>
        <svg width="9" height="22" viewBox="0 0 9 22" fill="#fff" stroke="#a9cdea">
          <path d="M.5 .5H8.500V21.500H.5Z" />
          <path d="M0 9L9 1M0 16L9 8M1 22L9 15" strokeWidth="2.500" />
        </svg>
        <span className="ml-3.5 text-base font-bold">ขอเชิญเข้าร่วมประชุมหารือปร...</span>
      </button>
    </aside>
  );
}

/* ---------- status bar ---------- */

function StatusBar() {
  return (
    <footer className="flex h-[33px] shrink-0 items-center border-t border-[#c6c6c6] bg-[#f2f2f2] pr-1.5 pl-2 text-sm text-[#444]">
      Items: 106
      <button type="button" aria-label="Normal view" className="ml-auto flex h-full w-11 items-center justify-center bg-[#c6c6c6]">
        <svg width="19" height="18" viewBox="0 0 19 18" fill="none" stroke="#666">
          <path d="M.5 .5H18.500V17.500H.5ZM5.500 .5V17.500" />
        </svg>
      </button>
      <button type="button" aria-label="Reading view" className="flex w-11 justify-center">
        <svg width="19" height="18" viewBox="0 0 19 18" fill="none" stroke="#666">
          <path d="M.5 .5H8L9.500 2L11 .5H18.500V16H11L9.500 17.500L8 16H.5ZM9.500 2V17M3 4.500H7M3 7.500H7M3 10.500H7M3 13.500H7M12 4.500H16M12 7.500H16M12 10.500H16M12 13.500H16" />
        </svg>
      </button>
      <button type="button" aria-label="Zoom out" className="ml-1.5 h-[3px] w-3 bg-[#666]" />
      <input
        type="range"
        aria-label="Zoom"
        defaultValue={50}
        className="mx-1.5 h-[3px] w-[148px] appearance-none bg-[#b0b0b0] [&::-webkit-slider-thumb]:h-[18px] [&::-webkit-slider-thumb]:w-2 [&::-webkit-slider-thumb]:appearance-none [&::-webkit-slider-thumb]:bg-[#777]"
      />
      <button type="button" aria-label="Zoom in">
        <svg width="12" height="12" viewBox="0 0 12 12" stroke="#666" strokeWidth="2.500">
          <path d="M6 0V12M0 6H12" />
        </svg>
      </button>
      <span className="ml-4 text-[15px]">100%</span>
    </footer>
  );
}

/* ---------- taskbar ---------- */

function TaskButton({ label, running, active, children }: { label: string; running?: boolean; active?: boolean; children: ReactNode }) {
  return (
    <button type="button" aria-label={label} className={`flex h-full w-[75px] flex-col items-center ${active ? "bg-[#4a4a4a]" : ""}`}>
      <span className="flex flex-1 items-center">{children}</span>
      <span className={`h-[3px] ${active ? "w-full bg-[#76b9ed]" : running ? "w-[61px] bg-[#76b9ed]" : "w-0"}`} />
    </button>
  );
}

function ChromeIcon({ badge }: { badge: string }) {
  return (
    <svg width="40" height="40" viewBox="0 0 40 40">
      <circle cx="18" cy="18" r="17.500" fill="#34a853" />
      <path d="M2.800 9.300A17.500 17.500 0 0 1 33.200 9.300H18L10.200 13.500L11 22Z" fill="#ea4335" />
      <path d="M33.200 9.300A17.500 17.500 0 0 1 18 35.500L26 22L24 9.300Z" fill="#fbbc04" />
      <circle cx="18" cy="18" r="8.700" fill="#fff" />
      <circle cx="18" cy="18" r="6.800" fill="#4285f4" />
      <circle cx="28" cy="28" r="11.500" fill={badge} />
      <text x="28" y="33" fontSize="14" textAnchor="middle" fill="#fff">S</text>
    </svg>
  );
}

function OfficeIcon({ color, letter, children }: { color: string; letter: string; children: ReactNode }) {
  return (
    <svg width="32" height="32" viewBox="0 0 32 32" fill="none">
      {children}
      <path d="M0 3L19 0V32L0 29Z" fill={color} />
      <text x="9.500" y="22" fontSize="17" fontWeight="700" textAnchor="middle" fill="#fff">{letter}</text>
    </svg>
  );
}

function Taskbar() {
  return (
    <footer className="flex h-[60px] shrink-0 items-stretch bg-[#1c1c1c] text-white">
      <div className="flex items-center [&>button]:flex [&>button]:w-[72px] [&>button]:justify-center">
        <button type="button" aria-label="Start">
          <svg width="24" height="24" viewBox="0 0 24 24" fill="#fff">
            <path d="M0 3.500L10 2V11.500H0ZM11 1.900L24 0V11.500H11ZM0 12.500H10V22L0 20.500ZM11 12.500H24V24L11 22.100Z" />
          </svg>
        </button>
        <button type="button" aria-label="Search">
          <svg width="33" height="34" viewBox="0 0 33 34" fill="none" stroke="#fff" strokeWidth="3">
            <circle cx="19" cy="13" r="11.500" />
            <path d="M11 21L1 33" />
          </svg>
        </button>
        <button type="button" aria-label="Task view">
          <svg width="25" height="25" viewBox="0 0 25 25" fill="none" stroke="#fff" strokeWidth="1.300">
            <path d="M1 0V4H16V0M1 7H16V18H1ZM1 25V21H16V25M22.500 0V6M22.500 12V25" />
            <path d="M21 7H24V11H21Z" fill="#fff" />
          </svg>
        </button>
      </div>
      <div className="ml-1 flex">
        <TaskButton label="File Explorer" running>
          <svg width="32" height="28" viewBox="0 0 32 28">
            <path d="M0 1H11L14 5H28V12H0Z" fill="#dd9c1a" />
            <path d="M0 5H32V26H0Z" fill="#fccf57" />
            <path d="M6 28V16H27V28H22V21H11V28Z" fill="#3a93d6" />
          </svg>
        </TaskButton>
        <TaskButton label="LINE" running>
          <svg width="36" height="36" viewBox="0 0 36 36">
            <rect width="36" height="36" rx="6" fill="#00b900" />
            <path d="M18 5C26 5 32 10 32 16.500C32 23 24 28 18 32V27C10 27 4 23 4 16.500C4 10 10 5 18 5Z" fill="#fff" />
            <text x="18" y="20" fontSize="9" fontWeight="800" textAnchor="middle" fill="#00b900">LINE</text>
          </svg>
        </TaskButton>
        <TaskButton label="Notepad">
          <svg width="34" height="32" viewBox="0 0 34 32">
            <path d="M29 2L34 8L30 28L24 28Z" fill="#a9823f" />
            <path d="M11 0L31 3L24 31L0 27Z" fill="#5fa9b8" />
            <path d="M12 0L31 3L28 14L8 14Z" fill="#c9e6ea" />
            <path d="M11 1L31 4" stroke="#eee" strokeWidth="2.500" strokeDasharray="2 1" />
          </svg>
        </TaskButton>
        <TaskButton label="Outlook" active>
          <OfficeIcon color="#0f72c5" letter="O">
            <path d="M16 8H31V25H16Z" fill="#fff" />
            <path d="M17 9L24 17L31 9" stroke="#0f72c5" strokeWidth="2.500" />
          </OfficeIcon>
        </TaskButton>
        <TaskButton label="Calculator">
          <svg width="28" height="36" viewBox="0 0 28 36">
            <rect width="28" height="36" rx="2" fill="#7d8b97" />
            <path d="M3 3H25V9H3Z" fill="#56d0f5" />
            <path d="M3 12H9V17H3ZM11 12H17V17H11ZM19 12H25V17H19ZM3 19H9V24H3ZM11 19H17V24H11ZM3 27H9V33H3ZM11 27H17V33H11Z" fill="#d8dee3" />
            <path d="M19 19H25V33H19Z" fill="#16498c" />
          </svg>
        </TaskButton>
        <TaskButton label="PowerPoint">
          <OfficeIcon color="#d14524" letter="P">
            <path d="M17 4H32V28H17Z" fill="#fff" stroke="#d14524" strokeWidth="2" />
            <path d="M21 19H29M21 23H29M25 8A4 4 0 1 0 29 12H25Z" stroke="#d14524" strokeWidth="2" />
          </OfficeIcon>
        </TaskButton>
        <TaskButton label="Word">
          <OfficeIcon color="#2a5699" letter="W">
            <path d="M17 4H32V28H17Z" fill="#fff" stroke="#2a5699" strokeWidth="1.500" />
            <path d="M19 9H29M19 13H29M19 17H29M19 21H29M19 25H29" stroke="#2a5699" strokeWidth="1.500" />
          </OfficeIcon>
        </TaskButton>
        <TaskButton label="Chrome" running>
          <ChromeIcon badge="#512da8" />
        </TaskButton>
        <TaskButton label="Snipping Tool">
          <svg width="34" height="34" viewBox="0 0 34 34" fill="none">
            <circle cx="17" cy="11" r="10.500" fill="#f4f4f4" stroke="#d9434e" strokeWidth="1.500" />
            <path d="M1 19Q3 11 12 15L16 20Q8 28 1 23Z" fill="#8e8e8e" />
            <path d="M13 3L19 20L24 4" stroke="#b9b9b9" strokeWidth="2.500" />
            <ellipse cx="26" cy="22" rx="6" ry="3.500" stroke="#2d8fd5" strokeWidth="2.500" />
            <ellipse cx="20" cy="28" rx="3.500" ry="5" stroke="#2d8fd5" strokeWidth="2.500" />
          </svg>
        </TaskButton>
        <TaskButton label="Sticky Notes">
          <svg width="32" height="32" viewBox="0 0 32 32">
            <path d="M0 0H32V18L18 32H0Z" fill="#fdd835" />
            <path d="M18 32V24L32 18V32Z" fill="#fbb614" />
            <path d="M16 32V19L31 17Z" fill="#4a4a4a" />
          </svg>
        </TaskButton>
        <TaskButton label="Chrome profile 2" running>
          <ChromeIcon badge="#5d4037" />
        </TaskButton>
      </div>

      <div className="ml-auto flex items-center">
        <button type="button" className="flex items-center gap-3 text-[20px]">
          <svg width="33" height="34" viewBox="0 0 33 34">
            <circle cx="16" cy="18" r="15.500" fill="#f39c1f" />
            <path d="M13 30A6 6 0 0 1 16 20A6 6 0 0 1 27 20A5 5 0 0 1 28 30Z" fill="#b9cff2" />
            <circle cx="24" cy="9" r="9" fill="#c72c22" />
            <text x="24" y="14" fontSize="12" fontWeight="700" textAnchor="middle" fill="#fff">3</text>
          </svg>
          <span>33°C</span>
          <span className="text-[17px]">มีแดดส่วนใหญ่</span>
        </button>
        <div className="ml-8 flex items-center [&>button]:flex [&>button]:w-9 [&>button]:justify-center">
          <button type="button" aria-label="Show hidden icons" className="mr-0.5">
            <svg width="18" height="11" viewBox="0 0 18 11" fill="none" stroke="#fff" strokeWidth="1.600">
              <path d="M1 10L9 1.500L17 10" />
            </svg>
          </button>
          <button type="button" aria-label="Security">
            <svg width="20" height="24" viewBox="0 0 20 24">
              <path d="M0 1H18V15Q17 22 10 24Q1 21 0 14Z" fill="#e9c65c" />
              <path d="M5 1V18M10 1V22" stroke="#b28f2b" />
              <circle cx="15" cy="18" r="5" fill="#2fa52f" />
            </svg>
          </button>
          <button type="button" aria-label="Monitor">
            <svg width="10" height="24" viewBox="0 0 10 24">
              <path d="M0 0H10V24H0Z" fill="#050505" />
              <path d="M1 1H9V8H1Z" fill="#e6502e" />
              <path d="M2 14V10H8M2 21V17H8" fill="none" stroke="#888" strokeWidth="1.500" />
            </svg>
          </button>
          <button type="button" aria-label="Battery">
            <svg width="25" height="18" viewBox="0 0 25 18">
              <path d="M7 4H23V16H6V12Z" fill="#fff" stroke="#fff" />
              <path d="M24 8V12M1 4H8V8Q8 10 4.500 10T1 8ZM3 0V4M6 0V4M4.500 10V15" stroke="#fff" fill="#1c1c1c" strokeWidth="1.300" />
            </svg>
          </button>
          <button type="button" aria-label="Volume">
            <svg width="24" height="20" viewBox="0 0 24 20" fill="none" stroke="#fff" strokeWidth="1.400">
              <path d="M1 7H5L10 2V18L5 13H1ZM13 7Q15 10 13 13M16 5Q19.500 10 16 15M19 2Q25 10 19 18" />
            </svg>
          </button>
          <button type="button" aria-label="Network">
            <svg width="20" height="19" viewBox="0 0 20 19" fill="none" stroke="#fff" strokeWidth="1.300">
              <path d="M1 18A17 17 0 0 1 18 1M6 18A12 12 0 0 1 18 6M11 18A7 7 0 0 1 18 11" />
              <circle cx="17" cy="17" r="1.500" fill="#fff" />
            </svg>
          </button>
        </div>
        <span className="w-[46px] text-center text-base">ไทย</span>
        <p className="w-[118px] pl-1 text-center text-[17px] leading-7">
          5:23 PM
          <br />
          19/03/2026
        </p>
        <button type="button" aria-label="Notifications" className="ml-1.5 flex w-12 justify-center">
          <svg width="26" height="25" viewBox="0 0 26 25" fill="none" stroke="#fff" strokeWidth="1.500">
            <path d="M1 1H25V19H16L12 23.500L9 19H1Z" />
          </svg>
        </button>
        <span className="mr-1.5 ml-5 h-full border-r border-[#777]" />
      </div>
    </footer>
  );
}
